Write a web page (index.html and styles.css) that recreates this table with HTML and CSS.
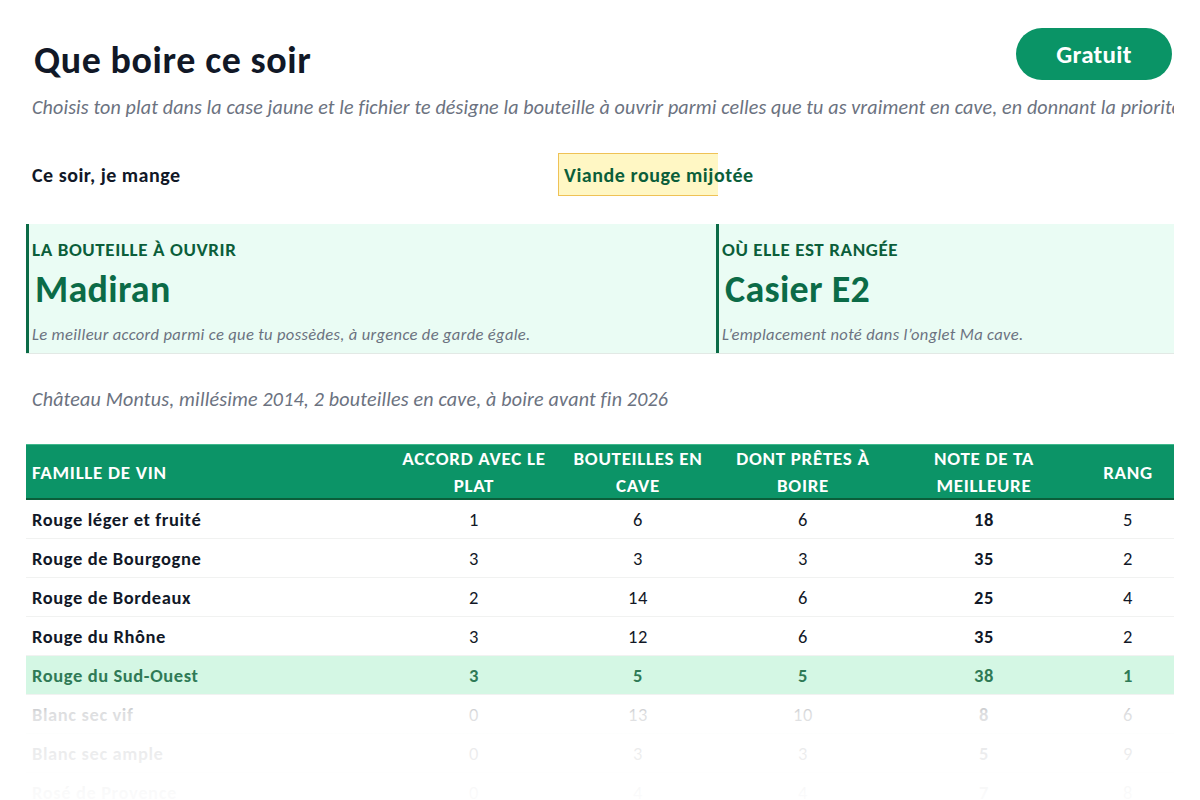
FILE: index.html
```html
<!DOCTYPE html>
<html lang="fr">
<head>
<meta charset="utf-8">
<title>Que boire ce soir</title>
<link rel="stylesheet" href="styles.css">
</head>
<body>
<div class="page">
  <header class="top">
    <h1 class="title">Que boire ce soir</h1>
    <a class="badge">Gratuit</a>
  </header>
  <p class="intro">Choisis ton plat dans la case jaune et le fichier te désigne la bouteille à ouvrir parmi celles que tu as vraiment en cave, en donnant la priorité aux bouteilles qui doivent être bues rapidement.</p>

  <div class="choice">
    <span class="choice-label">Ce soir, je mange</span>
    <div class="choice-input"><span>Viande rouge mijotée</span></div>
  </div>

  <div class="cards">
    <div class="card card-wide">
      <div class="card-label">LA BOUTEILLE À OUVRIR</div>
      <div class="card-value">Madiran</div>
      <div class="card-note">Le meilleur accord parmi ce que tu possèdes, à urgence de garde égale.</div>
    </div>
    <div class="card">
      <div class="card-label">OÙ ELLE EST RANGÉE</div>
      <div class="card-value">Casier E2</div>
      <div class="card-note">L’emplacement noté dans l’onglet Ma cave.</div>
    </div>
  </div>

  <p class="detail">Château Montus, millésime 2014, 2 bouteilles en cave, à boire avant fin 2026</p>

  <div class="table">
    <div class="row head">
      <div class="cell first">FAMILLE DE VIN</div>
      <div class="cell">ACCORD AVEC LE<br>PLAT</div>
      <div class="cell">BOUTEILLES EN<br>CAVE</div>
      <div class="cell">DONT PRÊTES À<br>BOIRE</div>
      <div class="cell">NOTE DE TA<br>MEILLEURE</div>
      <div class="cell">RANG</div>
    </div>
    <div class="row"><div class="cell first">Rouge léger et fruité</div><div class="cell">1</div><div class="cell">6</div><div class="cell">6</div><div class="cell strong">18</div><div class="cell">5</div></div>
    <div class="row"><div class="cell first">Rouge de Bourgogne</div><div class="cell">3</div><div class="cell">3</div><div class="cell">3</div><div class="cell strong">35</div><div class="cell">2</div></div>
    <div class="row"><div class="cell first">Rouge de Bordeaux</div><div class="cell">2</div><div class="cell">14</div><div class="cell">6</div><div class="cell strong">25</div><div class="cell">4</div></div>
    <div class="row"><div class="cell first">Rouge du Rhône</div><div class="cell">3</div><div class="cell">12</div><div class="cell">6</div><div class="cell strong">35</div><div class="cell">2</div></div>
    <div class="row best"><div class="cell first">Rouge du Sud-Ouest</div><div class="cell">3</div><div class="cell">5</div><div class="cell">5</div><div class="cell strong">38</div><div class="cell">1</div></div>
    <div class="row"><div class="cell first">Blanc sec vif</div><div class="cell">0</div><div class="cell">13</div><div class="cell">10</div><div class="cell strong">8</div><div class="cell">6</div></div>
    <div class="row"><div class="cell first">Blanc sec ample</div><div class="cell">0</div><div class="cell">3</div><div class="cell">3</div><div class="cell strong">5</div><div class="cell">9</div></div>
    <div class="row"><div class="cell first">Rosé de Provence</div><div class="cell">0</div><div class="cell">4</div><div class="cell">4</div><div class="cell strong">7</div><div class="cell">8</div></div>
  </div>
</div>
<div class="fade"></div>
</body>
</html>
```
FILE: styles.css
```css
html, body {
  margin: 0;
  padding: 0;
  background: #ffffff;
  width: 1200px;
  height: 800px;
  overflow: hidden;
}

body {
  font-family: "Carlito", "Lato", "Open Sans", sans-serif;
  color: #111827;
  position: relative;
}

.page {
  padding: 28px 26px 0 26px;
}

.top {
  display: flex;
  justify-content: space-between;
  align-items: flex-start;
  height: 52px;
}

.title {
  margin: 10px 0 0 8px;
  font-size: 38px;
  line-height: 44px;
  letter-spacing: 0.6px;
  font-weight: 700;
  color: #111827;
}

.badge {
  display: flex;
  align-items: center;
  justify-content: center;
  width: 156px;
  height: 52px;
  border-radius: 26px;
  background: #0a9466;
  color: #ffffff;
  font-size: 25px;
  letter-spacing: 0.3px;
  font-weight: 700;
  margin-right: 2px;
}

.intro {
  margin: 15px 0 0 6px;
  font-size: 20px;
  line-height: 24px;
  letter-spacing: 0.15px;
  font-style: italic;
  color: #6b7280;
  white-space: nowrap;
  overflow: hidden;
}

.choice {
  display: flex;
  align-items: center;
  margin-top: 34px;
  height: 43px;
}

.choice-label {
  width: 526px;
  padding-left: 6px;
  font-size: 20px;
  letter-spacing: 0.5px;
  font-weight: 700;
  color: #111827;
}

.choice-input {
  box-sizing: border-box;
  width: 160px;
  height: 43px;
  background: #fff7c4;
  border: 1px solid #efc256;
  border-right: none;
  display: flex;
  align-items: center;
  padding-left: 5px;
  white-space: nowrap;
  font-size: 20px;
  letter-spacing: 0.55px;
  font-weight: 700;
  color: #0b5e3a;
}

.cards {
  display: grid;
  grid-template-columns: 690px 1fr;
  margin-top: 28px;
  height: 129px;
  background: #eafcf4;
  border-bottom: 1px solid #e2e9e5;
}

.card {
  border-left: 3px solid #0b6b47;
  padding: 14px 0 0 3px;
  display: flex;
  flex-direction: column;
}

.card-label {
  font-size: 19px;
  line-height: 24px;
  letter-spacing: 0.6px;
  font-weight: 700;
  color: #0b5e3a;
}

.card-value {
  margin: 7px 0 0 3px;
  font-size: 38px;
  line-height: 40px;
  letter-spacing: 0.3px;
  font-weight: 700;
  color: #0b6b47;
}

.card-note {
  margin-top: 15px;
  font-size: 16.5px;
  line-height: 20px;
  letter-spacing: 0.35px;
  font-style: italic;
  color: #6b7280;
}

.detail {
  margin: 33px 0 0 6px;
  font-size: 20px;
  line-height: 24px;
  letter-spacing: 0.2px;
  font-style: italic;
  color: #6b7280;
}

.table {
  margin-top: 33px;
}

.row {
  display: grid;
  grid-template-columns: 366px 164px 164px 166px 196px 92px;
  height: 38px;
  align-items: center;
  border-bottom: 1px solid #f1f2f1;
  font-size: 18.5px;
  letter-spacing: 0.6px;
  color: #111827;
}

.row.head {
  height: 53px;
  background: #0c9467;
  border-top: 1px solid #3fb88c;
  border-bottom: 2px solid #0b5e3a;
  color: #ffffff;
  font-size: 19px;
  letter-spacing: 0.7px;
  font-weight: 700;
  line-height: 27px;
}

.cell {
  text-align: center;
}

.cell.first {
  text-align: left;
  padding-left: 6px;
  font-weight: 700;
}

.cell.strong {
  font-weight: 700;
}

.row.best {
  background: #d4f7e4;
  color: #2f7a56;
  font-weight: 700;
}

.fade {
  position: absolute;
  left: 0;
  right: 0;
  top: 695px;
  height: 105px;
  background: linear-gradient(to bottom,
    rgba(255,255,255,0.55) 0px,
    rgba(255,255,255,0.86) 18px,
    rgba(255,255,255,0.92) 60px,
    rgba(255,255,255,0.98) 100px);
  pointer-events: none;
}
```
